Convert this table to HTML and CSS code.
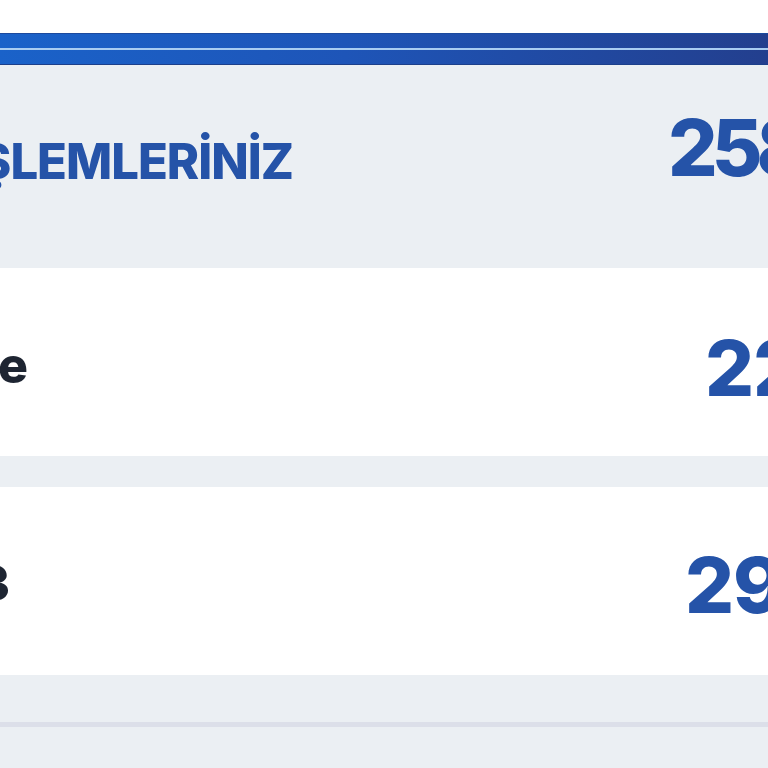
FILE: index.html
```html
<!DOCTYPE html>
<html lang="tr">
<head>
<meta charset="utf-8">
<link rel="stylesheet" href="styles.css">
</head>
<body>
<div class="page">
  <div class="top"></div>
  <div class="band"><div class="band-line"></div></div>
  <section class="head">
    <div class="label-box label-box--head"><h1 class="title">İŞLEMLERİNİZ</h1></div>
    <span class="total">2580</span>
  </section>
  <div class="list">
    <div class="row">
      <div class="label-box label-box--r1"><span class="label label--r1">Bekleyen İşlemlere</span></div>
      <span class="count count--r1">221</span>
    </div>
    <div class="row">
      <div class="label-box label-box--r2"><span class="label label--r2">Son 2023</span></div>
      <span class="count count--r2">290</span>
    </div>
  </div>
  <div class="foot"><div class="foot-line"></div></div>
</div>
</body>
</html>
```

FILE: styles.css
```css
html, body {
  margin: 0;
  padding: 0;
  background: #ffffff;
  overflow: hidden;
}
.page {
  width: 768px;
  font-family: Inter, Lato, "Noto Sans", sans-serif;
}
.top {
  height: 33px;
  background: #ffffff;
}
.band {
  height: 32px;
  background: linear-gradient(90deg, #1a62c9 0%, #1e55b8 45%, #233f8e 100%);
  box-sizing: border-box;
  border-top: 1px solid #1c4a9e;
  border-bottom: 1px solid #1c3f8a;
  display: flex;
  flex-direction: column;
  justify-content: center;
}
.band-line {
  height: 2px;
  background: #a9cdf2;
}
.head {
  height: 203px;
  background: #ebeff3;
  display: flex;
  align-items: flex-start;
  overflow: hidden;
}
.label-box {
  flex: 0 0 auto;
  display: flex;
  justify-content: flex-end;
  white-space: nowrap;
}
.label-box--head { width: 293px; margin-top: 72px; }
.label-box--r1 { width: 28px; margin-top: 72px; }
.label-box--r2 { width: 10px; margin-top: 71px; }
.title {
  margin: 0;
  font-size: 49px;
  line-height: 1;
  font-weight: 800;
  letter-spacing: -1px;
  color: #2553a8;
}
.total {
  flex: 0 0 auto;
  white-space: nowrap;
  margin-left: 375px;
  margin-top: 44px;
  font-size: 78px;
  line-height: 1;
  font-weight: 800;
  letter-spacing: -6px;
  color: #2553a8;
}
.list {
  background: #ebeff3;
  display: flex;
  flex-direction: column;
  gap: 31px;
}
.row {
  height: 188px;
  background: #ffffff;
  display: flex;
  align-items: flex-start;
  overflow: hidden;
}
.label {
  font-size: 50px;
  line-height: 1;
  font-weight: 800;
  color: #1e2532;
}
.count {
  flex: 0 0 auto;
  white-space: nowrap;
  font-size: 77px;
  line-height: 1;
  font-weight: 800;
  letter-spacing: -1px;
  color: #2553a8;
}
.count--r1 { margin-left: 677px; margin-top: 62px; }
.count--r2 { margin-left: 675px; margin-top: 60px; }
.foot {
  height: 93px;
  background: #ebeff3;
  padding-top: 47px;
  box-sizing: border-box;
}
.foot-line {
  height: 5px;
  background: #dcdfe9;
}
```
